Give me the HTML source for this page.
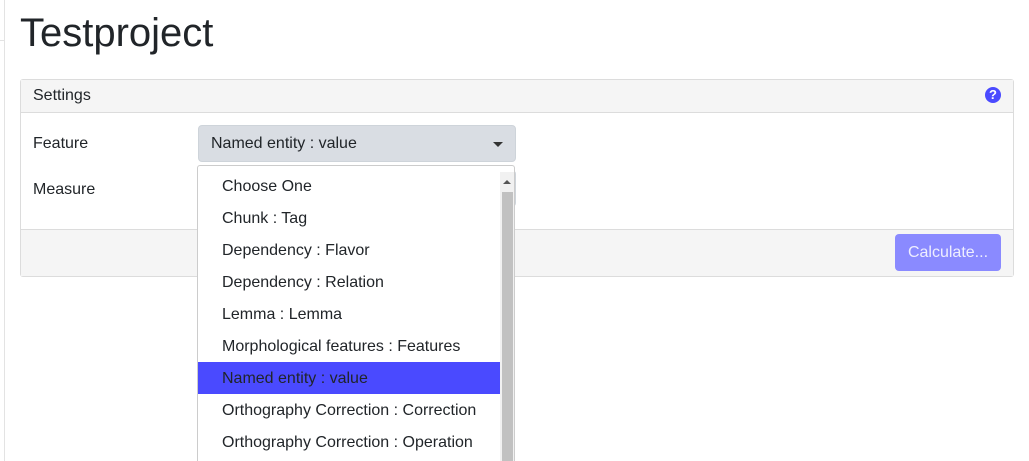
<!DOCTYPE html><html><head><style>
html,body{margin:0;width:1029px;height:461px;overflow:hidden}
body{background:#fff;font-family:"Liberation Sans",sans-serif;color:#212529;position:relative}
.a{position:absolute}
</style></head><body>
<div class="a" style="left:0;top:0;width:4px;height:461px;border-right:1px solid #e3e3e3"></div>
<div class="a" style="left:0;top:40px;width:4px;height:1px;background:#e3e3e3"></div>
<div class="a" style="left:20px;top:9px;font-size:40px;line-height:48px">Testproject</div>
<div class="a" style="left:20px;top:79px;width:992px;height:196px;border:1px solid #dcdcdc;border-radius:3px;background:#fff"></div>
<div class="a" style="left:21px;top:80px;width:992px;height:32px;background:#f5f5f5;border-bottom:1px solid #dcdcdc"></div>
<div class="a" style="left:33px;top:87px;font-size:16px">Settings</div>
<div class="a" style="left:985px;top:87px;width:16px;height:16px;border-radius:50%;background:#4a4aff;color:#fff;font-size:13px;font-weight:bold;text-align:center;line-height:16px">?</div>
<div class="a" style="left:21px;top:229px;width:992px;height:46px;background:#f5f5f5;border-top:1px solid #dcdcdc"></div>
<div class="a" style="left:895px;top:234px;width:106px;height:37px;border-radius:4px;background:#8a8aff;color:#eef;font-size:16px;line-height:38px;text-align:center">Calculate...</div>
<div class="a" style="left:33px;top:135px;font-size:16px">Feature</div>
<div class="a" style="left:33px;top:181px;font-size:16px">Measure</div>
<div class="a" style="left:198px;top:125px;width:318px;height:37px;background:#d9dde3;border:1px solid #ced4da;box-sizing:border-box;border-radius:4px"></div>
<div class="a" style="left:211px;top:135px;font-size:16px">Named entity : value</div>
<div class="a" style="left:493px;top:142px;width:0;height:0;border-left:5px solid transparent;border-right:5px solid transparent;border-top:5px solid #333"></div>
<div class="a" style="left:198px;top:170px;width:318px;height:37px;border:1px solid #ced4da;box-sizing:border-box;border-radius:4px"></div>
<div class="a" style="left:197px;top:165px;width:318px;height:296px;background:#fff;border:1px solid #ccc;border-bottom:none;border-radius:3px 3px 0 0;box-sizing:border-box;font-size:16px;line-height:32px;overflow:hidden">
<div style="position:absolute;left:302px;top:6px;width:14px;height:290px;background:#f1f1f1"></div>
<div style="position:absolute;left:305px;top:14px;width:0;height:0;border-left:4px solid transparent;border-right:4px solid transparent;border-bottom:4px solid #555"></div>
<div style="position:absolute;left:304px;top:26px;width:11px;height:280px;background:#c1c1c1"></div>
<div style="position:absolute;left:0;top:196px;width:302px;height:32px;background:#4a4aff"></div>
<div style="position:absolute;left:24px;top:5px">
<div>Choose One</div><div>Chunk : Tag</div><div>Dependency : Flavor</div><div>Dependency : Relation</div><div>Lemma : Lemma</div><div>Morphological features : Features</div><div>Named entity : value</div><div>Orthography Correction : Correction</div><div>Orthography Correction : Operation</div>
</div></div>
</body></html>
